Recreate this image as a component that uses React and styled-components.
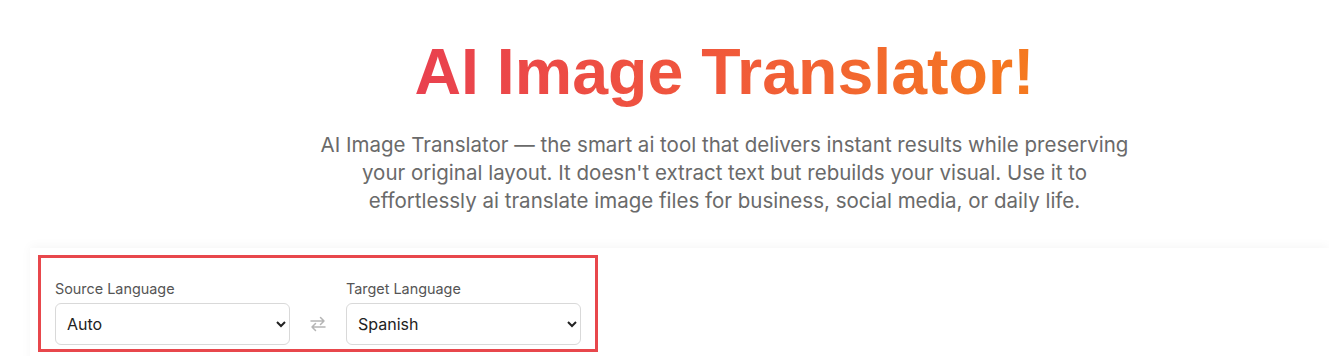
import styled, { createGlobalStyle } from "styled-components";

const GlobalStyle = createGlobalStyle`
  body {
    margin: 0;
    background: #ffffff;
    font-family: Inter, "Noto Sans", sans-serif;
  }
`;

const Page = styled.div`
  width: 1329px;
  height: 356px;
  overflow: hidden;
`;

const Hero = styled.header`
  display: flex;
  flex-direction: column;
  align-items: center;
  padding-left: 120px;
`;

const Title = styled.h1`
  margin: 34px 0 0;
  font-family: "Liberation Sans", Arial, sans-serif;
  font-size: 64.5px;
  line-height: 76px;
  font-weight: 700;
  background: linear-gradient(90deg, #e9414f 0%, #f0563d 45%, #f57a1f 100%);
  -webkit-background-clip: text;
  background-clip: text;
  color: transparent;
`;

const Lead = styled.p`
  margin: 21px 0 0;
  font-size: 20.5px;
  line-height: 28px;
  color: #6a6a6a;
  text-align: center;
  white-space: nowrap;
`;

const Card = styled.section`
  margin: 33px 0 0 30px;
  padding: 7px 0 0 8px;
  min-height: 120px;
  background: #ffffff;
  box-shadow: 0 -2px 10px rgba(0, 0, 0, 0.04);
`;

const Form = styled.div`
  box-sizing: border-box;
  width: 560px;
  height: 97px;
  border: 3px solid #e8474c;
  padding: 0 14px 4px;
  display: flex;
  align-items: flex-end;
`;

const Field = styled.label`
  display: flex;
  flex-direction: column;
  gap: 6px;
  width: 235px;
`;

const FieldLabel = styled.span`
  font-size: 14.4px;
  line-height: 17px;
  color: #555555;
`;

const Select = styled.select`
  height: 42px;
  width: 235px;
  border: 1px solid #d9d9d9;
  border-radius: 6px;
  background: #ffffff;
  padding: 0 8px 0 7px;
  font-family: Inter, "Noto Sans", sans-serif;
  font-size: 16px;
  color: #222222;
`;

const Swap = styled.div`
  width: 56px;
  height: 42px;
  display: flex;
  align-items: center;
  justify-content: center;
  color: #b5b5b5;
`;

const SwapIcon = () => (
  <svg width="18" height="18" viewBox="0 0 18 18" fill="none" stroke="currentColor" strokeWidth="1.5" strokeLinecap="round" strokeLinejoin="round">
    <path d="M2 6h13M11.5 2.5 15 6l-3.5 3.5" />
    <path d="M16 12H3M6.5 8.5 3 12l3.5 3.5" />
  </svg>
);

export default function App() {
  return (
    <Page>
      <GlobalStyle />
      <Hero>
        <Title>AI Image Translator!</Title>
        <Lead>
          AI Image Translator — the smart ai tool that delivers instant results while preserving
          <br />
          your original layout. It doesn't extract text but rebuilds your visual. Use it to
          <br />
          effortlessly ai translate image files for business, social media, or daily life.
        </Lead>
      </Hero>
      <Card>
        <Form>
          <Field>
            <FieldLabel>Source Language</FieldLabel>
            <Select defaultValue="auto">
              <option value="auto">Auto</option>
              <option value="en">English</option>
            </Select>
          </Field>
          <Swap>
            <SwapIcon />
          </Swap>
          <Field>
            <FieldLabel>Target Language</FieldLabel>
            <Select defaultValue="es">
              <option value="es">Spanish</option>
              <option value="en">English</option>
            </Select>
          </Field>
        </Form>
      </Card>
    </Page>
  );
}
